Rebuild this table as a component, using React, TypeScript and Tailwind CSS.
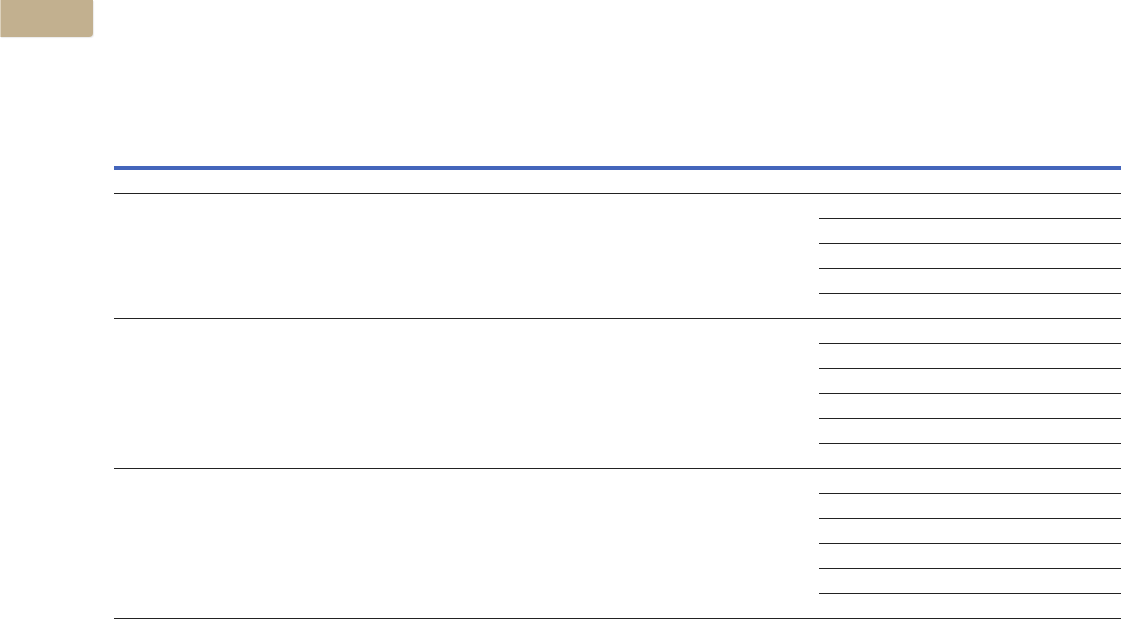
import React from 'react';

const groups = [5, 6, 6];

export default function App() {
  return (
    <div className="min-h-screen bg-white font-['Liberation_Sans',sans-serif]">
      <button className="block w-[93px] h-[37px] bg-[#c2b08f] border-l border-l-[#ddd2bd] rounded-br-sm shadow-[1px_1px_1px_rgba(0,0,0,0.08)]" />
      <div className="pl-[114px] pt-[129px]">
        <table className="w-full border-collapse table-fixed">
          <thead>
            <tr className="border-t-4 border-t-[#4465bb]">
              <th className="h-[25px] w-[705px] border-b border-b-[#222]" />
              <th className="h-[25px] border-b border-b-[#222]" />
            </tr>
          </thead>
          <tbody>
            {groups.map((count, g) => (
              <React.Fragment key={g}>
                {Array.from({ length: count }).map((_, i) => (
                  <tr key={i}>
                    {i === 0 && (
                      <td rowSpan={count} className="border-b border-b-[#222]" />
                    )}
                    <td className="h-[25px] border-b border-b-[#222]" />
                  </tr>
                ))}
              </React.Fragment>
            ))}
          </tbody>
        </table>
      </div>
    </div>
  );
}
